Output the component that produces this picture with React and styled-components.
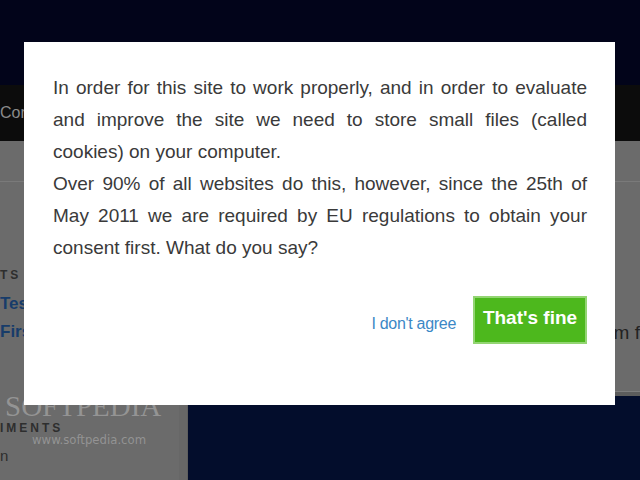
import React from "react";
import styled, { createGlobalStyle } from "styled-components";

const Global = createGlobalStyle`
  html, body {
    margin: 0;
    padding: 0;
    width: 640px;
    height: 480px;
    overflow: hidden;
    background: #6b6b6b;
    font-family: "Liberation Sans", Arial, sans-serif;
  }
`;

const Page = styled.div`
  position: relative;
  width: 640px;
  height: 480px;
  display: flex;
  flex-direction: column;
  overflow: hidden;
`;

const TopBar = styled.div`
  height: 85px;
  background: #02041a;
`;

const NavBar = styled.div`
  height: 56px;
  background: #0c0c0c;
  display: flex;
  align-items: center;
  color: #8a8a8a;
  font-size: 16px;
`;

const SubBar = styled.div`
  height: 40px;
  background: #6b6b6b;
  border-bottom: 1px solid #7a7a7a;
`;

const Body = styled.div`
  flex: 1;
  display: grid;
  grid-template-columns: 188px 1fr;
`;

const Sidebar = styled.div`
  background: #6b6b6b;
  border-right: 1px solid #5e5e5e;
  box-shadow: inset -8px 0 0 #676767;
  padding-top: 86px;
  display: flex;
  flex-direction: column;
`;

const SideHead = styled.div`
  font-size: 12px;
  letter-spacing: 3px;
  color: #2e2e2e;
  font-weight: bold;
  line-height: 14px;
  margin-top: ${(p) => p.top || 0}px;
  margin-bottom: 8px;
`;

const SideLink = styled.div`
  font-size: 17px;
  font-weight: bold;
  color: #173c6a;
  line-height: 28px;
`;

const SideText = styled.div`
  font-size: 15px;
  color: #2e2e2e;
  line-height: 26px;
`;

const Main = styled.div`
  display: flex;
  flex-direction: column;
`;

const MainGray = styled.div`
  height: 210px;
  background: #6b6b6b;
  border-bottom: 1px solid #7d7d7d;
  display: flex;
  justify-content: flex-end;
  padding-top: 140px;
  box-sizing: border-box;
  font-size: 19px;
  color: #222;
  white-space: nowrap;
`;

const MainFooter = styled.div`
  flex: 1;
  background: #030d2c;
  border-top: 4px solid #5c5c5c;
`;

const Watermark = styled.div`
  position: absolute;
  left: 5px;
  top: 392px;
  color: rgba(255, 255, 255, 0.28);
  pointer-events: none;
`;

const WmLogo = styled.div`
  font-family: "Liberation Serif", serif;
  font-size: 29px;
  line-height: 28px;
`;

const WmUrl = styled.div`
  font-family: "DejaVu Sans Condensed", "Liberation Sans", sans-serif;
  font-size: 13px;
  margin-left: 27px;
  margin-top: 12px;
`;

const Modal = styled.div`
  position: absolute;
  left: 24px;
  top: 42px;
  width: 591px;
  height: 363px;
  background: #fff;
  box-sizing: border-box;
  padding: 30px 28px 0 29px;
  display: flex;
  flex-direction: column;
`;

const Message = styled.div`
  font-size: 19px;
  line-height: 32px;
  color: #3a3a3a;
`;

const Line = styled.div`
  white-space: nowrap;
  text-align: ${(p) => (p.$justify ? "justify" : "left")};
  text-align-last: ${(p) => (p.$justify ? "justify" : "left")};
`;

const Actions = styled.div`
  display: flex;
  justify-content: flex-end;
  align-items: center;
  gap: 17px;
  margin-top: 32px;
`;

const Decline = styled.a`
  font-size: 16px;
  color: #3b88c6;
  padding-top: 8px;
  letter-spacing: -0.3px;
`;

const Accept = styled.button`
  height: 48px;
  width: 114px;
  padding: 0 0 4px;
  background: #4db81d;
  border: 2px solid #93d573;
  color: #fff;
  font-family: "Liberation Sans", Arial, sans-serif;
  font-weight: bold;
  font-size: 19px;
  white-space: nowrap;
`;

export default function App() {
  return (
    <>
      <Global />
      <Page>
        <TopBar />
        <NavBar>Cor</NavBar>
        <SubBar />
        <Body>
          <Sidebar>
            <SideHead>TS</SideHead>
            <SideLink>Tes</SideLink>
            <SideLink>Firs</SideLink>
            <SideHead top={75}>IMENTS</SideHead>
            <SideText>n</SideText>
          </Sidebar>
          <Main>
            <MainGray>m f</MainGray>
            <MainFooter />
          </Main>
        </Body>
        <Watermark>
          <WmLogo>SOFTPEDIA</WmLogo>
          <WmUrl>www.softpedia.com</WmUrl>
        </Watermark>
        <Modal>
          <Message>
            <Line $justify>In order for this site to work properly, and in order to evaluate</Line>
            <Line $justify>and improve the site we need to store small files (called</Line>
            <Line>cookies) on your computer.</Line>
            <Line $justify>Over 90% of all websites do this, however, since the 25th of</Line>
            <Line $justify>May 2011 we are required by EU regulations to obtain your</Line>
            <Line>consent first. What do you say?</Line>
          </Message>
          <Actions>
            <Decline>I don't agree</Decline>
            <Accept>That's fine</Accept>
          </Actions>
        </Modal>
      </Page>
    </>
  );
}
